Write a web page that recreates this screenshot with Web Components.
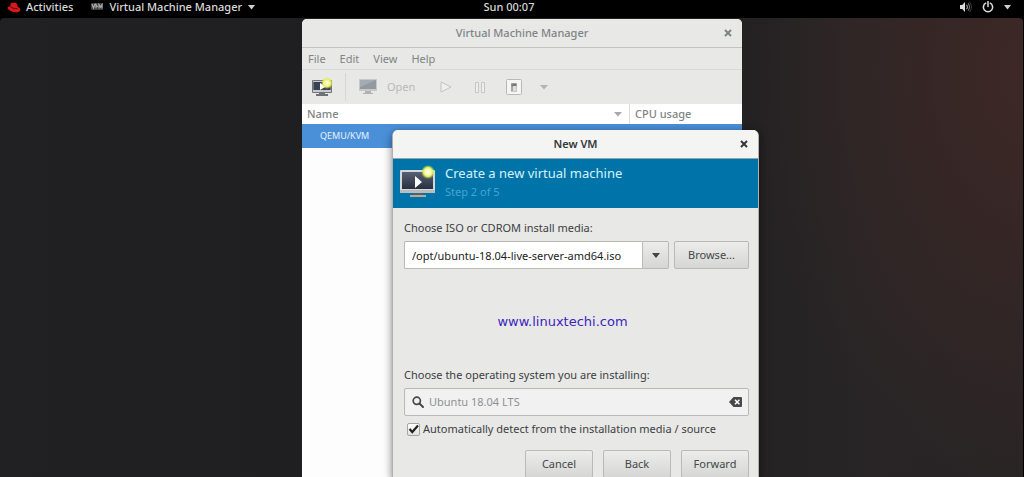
<!DOCTYPE html>
<html lang="en">
<head>
<meta charset="utf-8">
<title>Virtual Machine Manager</title>
<style>
  html, body { height: 100%; }
  body { margin: 0; overflow: hidden; background: #000; font: 11px/16px "Noto Sans", "Open Sans", sans-serif; }
</style>
</head>
<body>
<vm-desktop>
  <top-bar slot="bar"></top-bar>
  <manager-window></manager-window>
  <wizard-window></wizard-window>
</vm-desktop>

<script>
const define = (name, markup) => {
  const template = document.createElement('template');
  template.innerHTML = markup;
  customElements.define(name, class extends HTMLElement {
    constructor() {
      super();
      this.attachShadow({ mode: 'open' }).append(template.content.cloneNode(true));
    }
  });
};

const buttonReset = 'button { font: inherit; color: inherit; background: none; border: 0; margin: 0; padding: 0; }';

define('vm-desktop', `
  <style>
    :host { display: flex; flex-direction: column; height: 100%; }
    main {
      flex: 1; position: relative; overflow: hidden; margin-right: 1px; border-radius: 4px 4px 0 0;
      background:
        radial-gradient(ellipse 26% 90% at 100% 12%, #3d2826 0%, rgba(61,40,38,0) 100%),
        linear-gradient(90deg, #212124 0%, #1f1f21 30%, #242123 72%, #282526 84%, #292425 100%);
    }
  </style>
  <slot name="bar"></slot>
  <main><slot></slot></main>
`);

define('top-bar', `
  <style>
    :host { display: grid; grid-template-columns: 1fr auto 1fr; align-items: center; height: 18px; padding: 0 13px 4px 7px; box-sizing: border-box; background: #000; color: #dadada; font-weight: 500; line-height: 14px; }
    ${buttonReset}
    .left, .right, button { display: flex; align-items: center; }
    .left { gap: 18px; }
    .left button { gap: 6px; }
    .left button:first-child { gap: 5px; }
    .right { justify-content: flex-end; }
    .right button { gap: 10px; }
    svg { display: block; }
  </style>
  <div class="left">
    <button>
      <svg width="14" height="11" viewBox="0 0 14 11"><path d="M4 1.2C5 .2 6 1 7 .9c1.300-.2 2.600 0 3 1.300l.7 2.600c1.900.7 3 2 2.700 3.200C12.800 10 10.300 10.800 7.600 10.300 4.200 9.700 1 7.700.6 6 .4 5 1.600 4.400 3 4.300z" fill="#d8181d"/><path d="M3.200 4.400c1.700 1.800 4.700 2.800 7.300 2" fill="none" stroke="#460608" stroke-width="1"/></svg>
      <span>Activities</span>
    </button>
    <button>
      <svg width="12" height="8" viewBox="0 0 12 8"><rect width="12" height="7" rx="1" fill="#3d3d3d"/><path d="M1 1l1.500 4L4 1M5 5.500V1.500L6.500 4M8 5.500v-4L9.500 4 11 1.500v4" fill="none" stroke="#aaa" stroke-width="1.200"/></svg>
      <span>Virtual Machine Manager</span>
      <svg width="7" height="5" viewBox="0 0 7 5"><path d="M0 0h7L3.500 4.500z" fill="#d0d0d0"/></svg>
    </button>
  </div>
  <button>Sun 00:07</button>
  <div class="right">
    <button aria-label="System menu">
      <svg width="13" height="12" viewBox="0 0 13 12"><path d="M1 4h2.200L6 1v10L3.200 8H1z" fill="#ddd"/><path d="M7.500 3.800c1.200 1.200 1.200 3.200 0 4.400" fill="none" stroke="#aaa" stroke-width="1.100"/><path d="M9 2.300c2 2 2 5.400 0 7.400" fill="none" stroke="#777" stroke-width="1.100"/><path d="M10.400 1c2.600 2.700 2.600 7.300 0 10" fill="none" stroke="#444"/></svg>
      <svg width="12" height="12" viewBox="0 0 12 12"><path d="M3.700 2.200a4.600 4.600 0 1 0 4.600 0M6 .5v5" fill="none" stroke="#ddd" stroke-width="1.500" stroke-linecap="round"/></svg>
      <svg width="7" height="5" viewBox="0 0 7 5"><path d="M0 0h7L3.500 4.500z" fill="#d0d0d0"/></svg>
    </button>
  </div>
`);

define('title-bar', `
  <style>
    :host { display: grid; grid-template-columns: 24px 1fr 24px; align-items: center; height: 28px; padding: 0 2px; text-align: center; font-weight: 500; border-bottom: 1px solid var(--line, #c2c2c0); }
    h1 { margin: 0; font: inherit; grid-column: 2; }
    ${buttonReset}
    button { display: grid; place-items: center; height: 20px; }
  </style>
  <h1><slot></slot></h1>
  <button aria-label="Close"><svg width="8" height="8" viewBox="0 0 8 8"><path d="M1 1l6 6M7 1L1 7" stroke="currentColor" stroke-width="2"/></svg></button>
`);

define('new-vm-icon', `
  <style>:host { display: block; width: 36px; } svg { display: block; width: 100%; }</style>
  <svg viewBox="0 0 36 33">
    <defs>
      <linearGradient id="s" x2="0" y2="1"><stop stop-color="#566174"/><stop offset="1" stop-color="#29313f"/></linearGradient>
      <radialGradient id="g"><stop stop-color="#fff"/><stop offset=".4" stop-color="#fbfbb8"/><stop offset=".65" stop-color="#e2ee55"/><stop offset="1" stop-color="#c4e23a" stop-opacity="0"/></radialGradient>
    </defs>
    <path d="M13 28h10v2h3v2H10v-2h3z" fill="#b6a99a"/><path d="M13 28h10v2H13z" fill="#54636b"/>
    <rect x="0" y="5" width="35" height="23" rx="1" fill="#d5d7d8"/>
    <rect x="2" y="7" width="31" height="17" fill="url(#s)"/>
    <path d="M0 25h35v3H0z" fill="#b9bdc0"/>
    <path d="M15 11l7 6-7 6z" fill="#fff"/>
    <circle cx="28" cy="7" r="7" fill="url(#g)"/>
  </svg>
`);

define('manager-window', `
  <style>
    :host { position: absolute; left: 302px; top: 1px; bottom: 0; width: 440px; display: flex; flex-direction: column; background: #fdfdfd; border-radius: 5px 5px 0 0; overflow: hidden; color: #7f8485; }
    ${buttonReset}
    title-bar, nav, .tools { background: #e8e8e6; }
    nav { display: flex; gap: 14px; padding: 3px 6px 2px; border-bottom: 1px solid #d8d8d6; }
    .tools { display: flex; align-items: center; height: 34px; padding: 0 9px; color: #b9bab8; }
    .tools > * { flex: none; }
    .tools svg { display: block; }
    .sep { width: 1px; height: 28px; margin: 0 13px 0 12px; background: #d6d6d4; }
    .open { display: flex; align-items: center; gap: 10px; margin-right: 25px; }
    .play { margin-right: 23px; }
    .pause { margin-right: 21px; }
    .power { margin-right: 18px; }
    table { width: 100%; table-layout: fixed; border-collapse: collapse; }
    th { height: 20px; padding: 0 5px; text-align: left; font-weight: 500; background: #fff; }
    th + th { width: 102px; border-left: 1px solid #dededd; }
    th div { display: flex; justify-content: space-between; align-items: center; padding-right: 2px; }
    td { height: 24px; padding: 0 18px; font-size: 9px; line-height: 14px; background: #4a90d9; color: #e8f2fc; }
  </style>
  <title-bar>Virtual Machine Manager</title-bar>
  <nav><button>File</button><button>Edit</button><button>View</button><button>Help</button></nav>
  <div class="tools" role="toolbar">
    <button aria-label="New virtual machine">
      <svg width="22" height="20" viewBox="0 0 22 20">
        <defs><radialGradient id="n"><stop stop-color="#fff"/><stop offset=".3" stop-color="#fcfcb0"/><stop offset=".65" stop-color="#e9ec62"/><stop offset="1" stop-color="#dce83c" stop-opacity="0"/></radialGradient></defs>
        <path d="M8 16h6v1h3v2H5v-2h3z" fill="#6e7173"/>
        <rect x="1" y="3" width="20" height="13" rx="1" fill="#717577"/>
        <path d="M2 4h18v1H2zM2 13h18v2H2z" fill="#c8cacb"/>
        <path d="M3 5h16v8H3z" fill="#384254"/>
        <path d="M9 6l6 3.500L9 13z" fill="#fff"/>
        <circle cx="16" cy="6" r="6" fill="url(#n)"/>
      </svg>
    </button>
    <span class="sep"></span>
    <button class="open"><svg width="18" height="16" viewBox="0 0 18 16"><path d="M0 0h18v12H0z" fill="#c6c8c9"/><path d="M1 1h16v9H1z" fill="#9399a2"/><path d="M1 1h16L1 8z" fill="#a5abb4"/><path d="M6 12h6v2h2v1H4v-1h2z" fill="#b3b1ad"/></svg>Open</button>
    <button class="play" aria-label="Run"><svg width="12" height="12" viewBox="0 0 12 12"><path d="M1 1l10 5-10 5z" fill="#eee" stroke="#c2c3c0"/></svg></button>
    <button class="pause" aria-label="Pause"><svg width="10" height="11" viewBox="0 0 10 11"><path d="M.5.5h3v10h-3zM6.500.5h3v10h-3z" fill="#eee" stroke="#c6c7c4"/></svg></button>
    <button class="power" aria-label="Shut down"><svg width="16" height="16" viewBox="0 0 16 16"><rect x=".5" y=".5" width="15" height="15" rx="1" fill="#f5f5f4" stroke="#b9bab7"/><path d="M5 4h6v9H5z" fill="#c4c5c4"/><path d="M5.500 4.500h5v3h-5z" fill="#777"/><path d="M6 5v7" stroke="#888"/><path d="M7 7h3v5H7z" fill="#ddd"/></svg></button>
    <button aria-label="Shutdown options"><svg width="8" height="5" viewBox="0 0 8 5"><path d="M0 0h8L4 4.500z" fill="#b3b4b1"/></svg></button>
  </div>
  <table>
    <thead><tr><th><div>Name<svg width="8" height="5" viewBox="0 0 8 5"><path d="M0 0h8L4 4.500z" fill="#a9aaa8"/></svg></div></th><th>CPU usage</th></tr></thead>
    <tbody><tr><td>QEMU/KVM</td><td></td></tr></tbody>
  </table>
`);

define('push-button', `
  <style>
    :host { display: block; }
    button { width: 100%; height: 28px; margin: 0; padding: 0; display: grid; place-items: center; box-sizing: border-box; font: inherit; color: #43484a; background: linear-gradient(#ececeb, #d6d6d4); border: 1px solid #b9b9b6; border-radius: var(--radius, 2px); }
  </style>
  <button><slot></slot></button>
`);

define('wizard-window', `
  <style>
    :host { position: absolute; left: 392px; top: 112px; width: 367px; box-sizing: border-box; border: 1px solid #aeb1b1; border-top: 0; border-radius: 6px 6px 0 0; background: #e8e8e6; color: #3c4143; box-shadow: 0 2px 8px rgba(0,0,0,.5); }
    title-bar { --line: #8fa5ac; background: #f4f4f3; border-radius: 5px 5px 0 0; color: #33383a; font-weight: 600; }
    header { display: flex; align-items: flex-start; gap: 9px; height: 43px; padding: 6px 7px 0; background: #0073a9; }
    header div { display: grid; gap: 2px; }
    h2 { margin: 0; font-weight: 400; font-size: 13px; line-height: 17px; color: #d3f4fa; }
    p { margin: 0; color: #44a4d3; }
    form { padding: 12px 9px 0 11px; }
    label { display: block; }
    .row { display: flex; gap: 5px; margin-top: 5px; }
    .combo { flex: 1; display: flex; min-width: 0; }
    input[type=text] { flex: 1; min-width: 0; box-sizing: border-box; font: inherit; border: 0; outline: 0; margin: 0; padding: 0; background: none; appearance: none; }
    .combo input { height: 28px; padding: 0 7px; color: #1c1c1c; background: #fff; border: 1px solid #b9b9b6; border-right: 0; border-radius: 2px 0 0 2px; }
    .combo push-button { width: 27px; --radius: 0 2px 2px 0; }
    .browse { width: 75px; }
    .link { margin: 44px 0 37px; text-align: center; padding-right: 28px; font: 13px/17px "DejaVu Sans", sans-serif; }
    a { color: #3c1fc0; text-decoration: none; }
    .search { display: flex; align-items: center; gap: 5px; height: 28px; box-sizing: border-box; margin-top: 5px; padding: 0 6px 0 7px; background: #f1f1f2; border: 1px solid #b9b9b6; border-radius: 2px; }
    .search input { color: #8f9293; }
    .clear { border: 0; padding: 0; background: none; }
    .check { display: flex; align-items: center; gap: 3px; margin: 5px 0 13px 3px; }
    .check input { appearance: none; margin: 0; width: 13px; height: 13px; border: 1px solid #a5a7a5; border-radius: 2px; background: linear-gradient(#fff, #e2e2e0); }
    .box { display: grid; }
    .box > * { grid-area: 1 / 1; place-self: center; pointer-events: none; }
    .box > input { pointer-events: auto; }
    footer { display: flex; justify-content: flex-end; gap: 10px; }
    footer push-button { width: 68px; }
    svg { display: block; flex: none; }
  </style>
  <title-bar>New VM</title-bar>
  <header>
    <new-vm-icon></new-vm-icon>
    <div><h2>Create a new virtual machine</h2><p>Step 2 of 5</p></div>
  </header>
  <form onsubmit="return false">
    <label for="iso">Choose ISO or CDROM install media:</label>
    <div class="row">
      <div class="combo"><input id="iso" type="text" value="/opt/ubuntu-18.04-live-server-amd64.iso"><push-button><svg width="8" height="5" viewBox="0 0 8 5" role="img" aria-label="Show list"><path d="M0 0h8L4 5z" fill="#444"/></svg></push-button></div>
      <push-button class="browse">Browse...</push-button>
    </div>
    <div class="link"><a href="#">www.linuxtechi.com</a></div>
    <label for="os">Choose the operating system you are installing:</label>
    <div class="search">
      <svg width="12" height="12" viewBox="0 0 12 12"><circle cx="4.800" cy="4.800" r="3.600" fill="none" stroke="#45494a" stroke-width="1.700"/><path d="M7.500 7.500L11 11" stroke="#45494a" stroke-width="2" stroke-linecap="round"/></svg>
      <input id="os" type="text" value="Ubuntu 18.04 LTS">
      <button type="button" class="clear" aria-label="Clear"><svg width="13" height="10" viewBox="0 0 13 10"><path d="M4.500 0H12q1 0 1 1v8q0 1-1 1H4.500L0 5z" fill="#45494a"/><path d="M6 2.700l4.400 4.600M10.400 2.700L6 7.300" stroke="#fff" stroke-width="1.500"/></svg></button>
    </div>
    <div class="check">
      <span class="box"><input id="auto" type="checkbox" checked><svg width="11" height="10" viewBox="0 0 11 10"><path d="M1.500 5l2.800 3L10 1.500" fill="none" stroke="#222" stroke-width="2.200"/></svg></span>
      <label for="auto">Automatically detect from the installation media / source</label>
    </div>
    <footer><push-button>Cancel</push-button><push-button>Back</push-button><push-button>Forward</push-button></footer>
  </form>
`);
</script>
</body>
</html>
